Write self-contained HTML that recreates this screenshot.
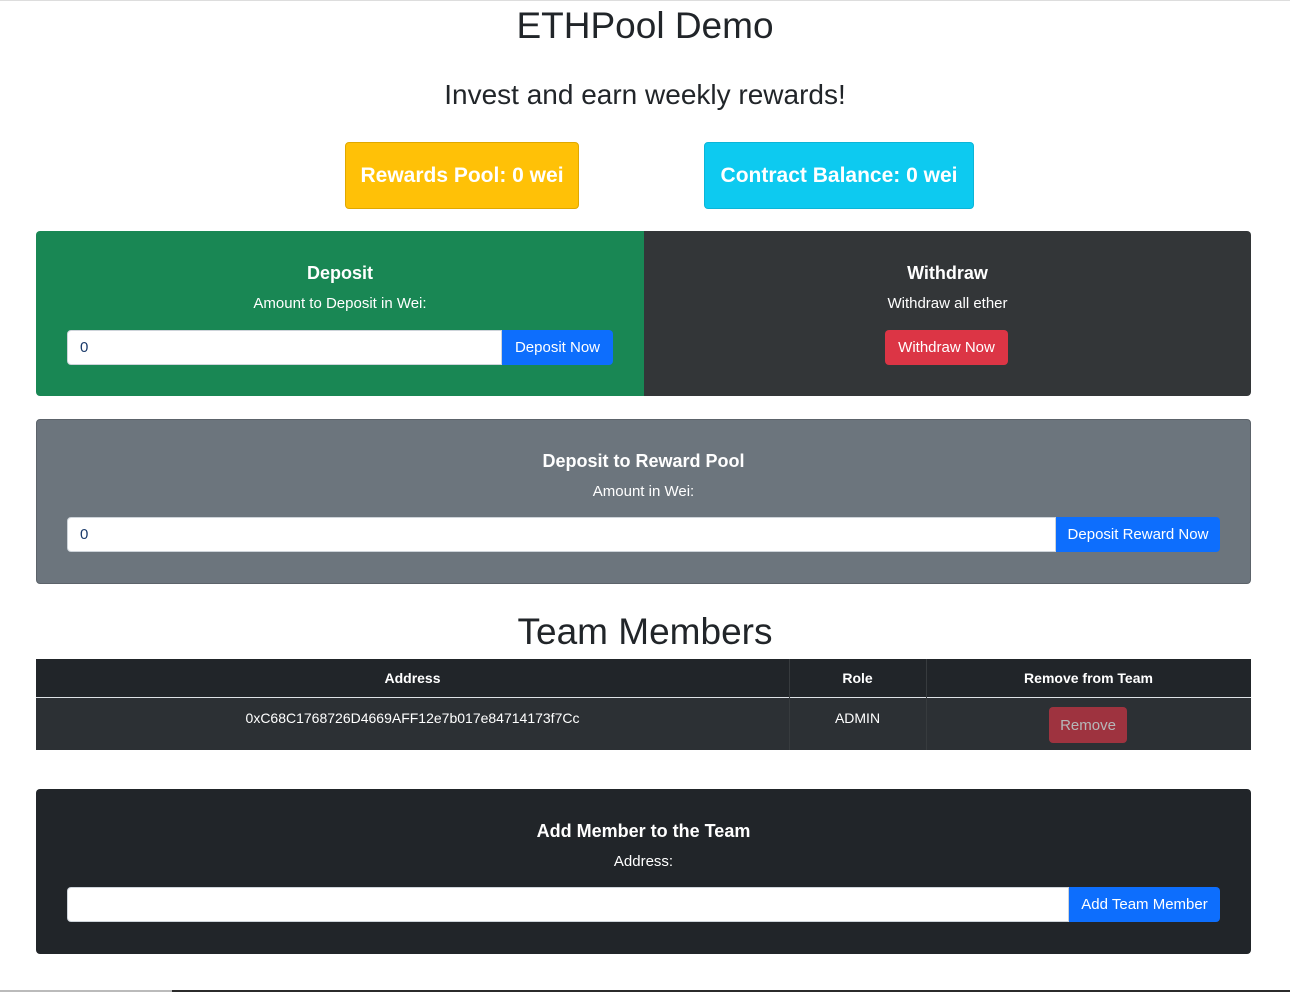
<!DOCTYPE html>
<html><head><style>
*{box-sizing:border-box;margin:0;padding:0}
body{width:1290px;height:992px;background:#fff;font-family:"Liberation Sans",sans-serif;color:#212529;position:relative;overflow:hidden}
.a{position:absolute}
h1{position:absolute;left:0;width:1290px;text-align:center;font-weight:500}
.badge{position:absolute;border-radius:4px;font-size:21px;font-weight:700;color:#fff;display:flex;align-items:center;justify-content:center}
.t{position:absolute;text-align:center;color:#fff}
.tt{font-size:18px;font-weight:700}
.ts{font-size:15px}
.inp{position:absolute;background:#fff;border:1px solid #ced4da;border-radius:4px 0 0 4px;font-size:15px;color:#1a3a6a;padding:8px 12px;height:35px}
.btn{position:absolute;color:#fff;font-size:15px;display:flex;align-items:center;justify-content:center;height:35px}
.blue{background:#0d6efd;border-radius:0 4px 4px 0}
</style></head><body>
<div class="a" style="left:0;top:0;width:1290px;height:1px;background:#ddd"></div>
<h1 style="top:5px;font-size:37px">ETHPool Demo</h1>
<h1 style="top:79px;font-size:28px">Invest and earn weekly rewards!</h1>
<div class="badge" style="left:345px;top:142px;width:234px;height:67px;background:#ffc107;border:1px solid #e0a800">Rewards Pool: 0 wei</div>
<div class="badge" style="left:704px;top:142px;width:270px;height:67px;background:#0dcaf0;border:1px solid #0bb5d8">Contract Balance: 0 wei</div>

<div class="a" style="left:36px;top:231px;width:608px;height:165px;background:#198754;border-radius:4px 0 0 4px"></div>
<div class="a" style="left:644px;top:231px;width:607px;height:165px;background:#333638;border-radius:0 4px 4px 0"></div>
<div class="t tt" style="left:36px;width:608px;top:263px">Deposit</div>
<div class="t ts" style="left:36px;width:608px;top:295px">Amount to Deposit in Wei:</div>
<div class="inp" style="left:67px;top:330px;width:435px">0</div>
<div class="btn blue" style="left:502px;top:330px;width:111px">Deposit Now</div>
<div class="t tt" style="left:644px;width:607px;top:263px">Withdraw</div>
<div class="t ts" style="left:644px;width:607px;top:295px">Withdraw all ether</div>
<div class="btn" style="left:885px;top:330px;width:123px;background:#dc3545;border-radius:4px">Withdraw Now</div>

<div class="a" style="left:36px;top:419px;width:1215px;height:165px;background:#6c757d;border:1px solid #5c636a;border-radius:4px"></div>
<div class="t tt" style="left:36px;width:1215px;top:451px">Deposit to Reward Pool</div>
<div class="t ts" style="left:36px;width:1215px;top:483px">Amount in Wei:</div>
<div class="inp" style="left:67px;top:517px;width:989px">0</div>
<div class="btn blue" style="left:1056px;top:517px;width:164px">Deposit Reward Now</div>

<h1 style="top:611px;font-size:37px">Team Members</h1>
<div class="a" style="left:36px;top:659px;width:1215px;height:39px;background:#212529;border-bottom:1px solid #dee2e6"></div>
<div class="a" style="left:36px;top:698px;width:1215px;height:52px;background:#2c3034"></div>
<div class="a" style="left:789px;top:659px;width:1px;height:91px;background:#373b3e"></div>
<div class="a" style="left:926px;top:659px;width:1px;height:91px;background:#373b3e"></div>
<div class="t" style="left:36px;width:753px;top:670px;font-size:14px;font-weight:700">Address</div>
<div class="t" style="left:789px;width:137px;top:670px;font-size:14px;font-weight:700">Role</div>
<div class="t" style="left:926px;width:325px;top:670px;font-size:14px;font-weight:700">Remove from Team</div>
<div class="t" style="left:36px;width:753px;top:710px;font-size:14px">0xC68C1768726D4669AFF12e7b017e84714173f7Cc</div>
<div class="t" style="left:789px;width:137px;top:710px;font-size:14px">ADMIN</div>
<div class="btn" style="left:1049px;top:707px;width:78px;height:36px;background:#dc3545;opacity:.65;border-radius:4px">Remove</div>

<div class="a" style="left:36px;top:789px;width:1215px;height:165px;background:#212529;border-radius:4px"></div>
<div class="t tt" style="left:36px;width:1215px;top:821px">Add Member to the Team</div>
<div class="t ts" style="left:36px;width:1215px;top:853px">Address:</div>
<div class="inp" style="left:67px;top:887px;width:1002px"></div>
<div class="btn blue" style="left:1069px;top:887px;width:151px">Add Team Member</div>

<div class="a" style="left:0;top:990px;width:1290px;height:2px;background:#2b2b2b"></div>
<div class="a" style="left:0;top:990px;width:172px;height:2px;background:#bbb"></div>
</body></html>
